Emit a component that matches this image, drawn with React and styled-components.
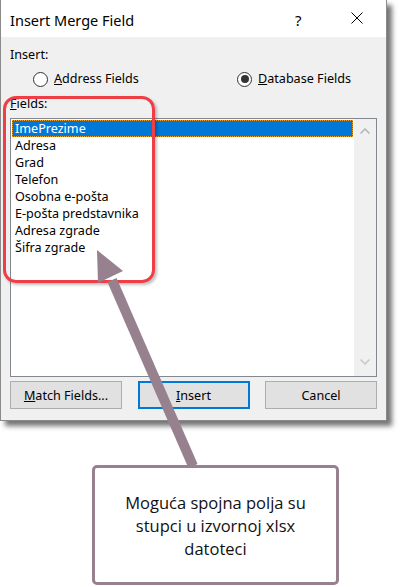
import React from 'react'
import styled, { createGlobalStyle } from 'styled-components'

const GlobalStyle = createGlobalStyle`
  html, body { margin: 0; padding: 0; background: #fff; }
  body { font-family: "Noto Sans", "Open Sans", sans-serif; }
`

const fields = [
  'ImePrezime',
  'Adresa',
  'Grad',
  'Telefon',
  'Osobna e-pošta',
  'E-pošta predstavnika',
  'Adresa zgrade',
  'Šifra zgrade',
]

const App = () => {
  return (
    <Page>
      <GlobalStyle />
      <Dialog>
        <TitleBar>
          <Title>Insert Merge Field</Title>
          <HelpMark>?</HelpMark>
          <CloseIcon viewBox="0 0 12 12">
            <path d="M0.5 0.5 L11.5 11.5 M11.5 0.5 L0.5 11.5" stroke="#000" strokeWidth="1" />
          </CloseIcon>
        </TitleBar>
        <Body>
          <Label>Insert:</Label>
          <RadioRow>
            <RadioOption>
              <Radio />
              <span><u>A</u>ddress Fields</span>
            </RadioOption>
            <RadioOption>
              <Radio checked />
              <span><u>D</u>atabase Fields</span>
            </RadioOption>
          </RadioRow>
          <FieldsLabel><u>F</u>ields:</FieldsLabel>
          <ListBox>
            <Items>
              {fields.map((f, i) => (
                <Item key={f} selected={i === 0}>{f}</Item>
              ))}
            </Items>
            <ScrollBar>
              <svg width="10" height="6" viewBox="0 0 10 6">
                <path d="M0.5 5.5 L5 1 L9.5 5.5" fill="none" stroke="#b4b4b4" strokeWidth="1.5" />
              </svg>
              <svg width="10" height="6" viewBox="0 0 10 6">
                <path d="M0.5 0.5 L5 5 L9.5 0.5" fill="none" stroke="#c8c8c8" strokeWidth="1.5" />
              </svg>
            </ScrollBar>
          </ListBox>
          <ButtonRow>
            <Button><u>M</u>atch Fields...</Button>
            <Button primary><u>I</u>nsert</Button>
            <Button>Cancel</Button>
          </ButtonRow>
        </Body>
      </Dialog>

      <Callout>
        Moguća spojna polja su stupci u izvornoj xlsx datoteci
      </Callout>

      <Highlight />
      <ArrowLayer viewBox="0 0 402 587" width="402" height="587">
        <line x1="112" y1="280" x2="193" y2="466" stroke="#97818f" strokeWidth="10" />
        <polygon points="97,250 123,271 98,283" fill="#97818f" />
      </ArrowLayer>
    </Page>
  )
}

const Page = styled.div`
  position: relative;
  width: 402px;
  height: 587px;
  overflow: hidden;
  background: #fff;
`

const Dialog = styled.div`
  width: 387px;
  height: 421px;
  box-sizing: border-box;
  border: 1px solid #8a8a8a;
  border-top: none;
  background: #f0f0f0;
  box-shadow: 5px 5px 5px rgba(0, 0, 0, 0.55);
  display: flex;
  flex-direction: column;
`

const TitleBar = styled.div`
  height: 37px;
  background: #fff;
  display: flex;
  align-items: center;
  padding-left: 9px;
  padding-top: 2px;
  box-sizing: border-box;
`

const Title = styled.div`
  flex: 1;
  font-size: 14.5px;
  color: #000;
`

const HelpMark = styled.div`
  font-size: 15px;
  width: 14px;
  margin-right: 42px;
`

const CloseIcon = styled.svg`
  width: 12px;
  height: 12px;
  margin-right: 23px;
  margin-bottom: 3px;
`

const Body = styled.div`
  flex: 1;
  display: flex;
  flex-direction: column;
  padding: 10px 9px 11px 9px;
  font-size: 12.6px;
  color: #000;
`

const Label = styled.div`
  line-height: 16px;
`

const RadioRow = styled.div`
  display: flex;
  height: 16px;
  margin-top: 8px;
  padding-left: 23px;
`

const RadioOption = styled.label`
  display: flex;
  align-items: center;
  gap: 6px;
  line-height: 16px;
  &:first-child { width: 204px; }
`

const Radio = styled.span`
  width: 15px;
  height: 15px;
  border: 1px solid #333;
  border-radius: 50%;
  background: #fff;
  box-sizing: border-box;
  display: flex;
  align-items: center;
  justify-content: center;
  &::after {
    content: '';
    width: 8px;
    height: 8px;
    border-radius: 50%;
    background: ${p => (p.checked ? '#333' : 'transparent')};
  }
`

const FieldsLabel = styled.div`
  margin-top: 9px;
  line-height: 16px;
`

const ListBox = styled.div`
  margin-top: 6px;
  height: 259px;
  border: 1px solid #828790;
  background: #fff;
  display: flex;
  box-sizing: border-box;
`

const Items = styled.div`
  flex: 1;
  padding: 1px;
`

const Item = styled.div`
  height: 17px;
  line-height: 17px;
  padding-left: 3px;
  box-sizing: border-box;
  background: ${p => (p.selected ? '#0078d7' : 'transparent')};
  color: ${p => (p.selected ? '#fff' : '#000')};
  outline: ${p => (p.selected ? '1px dotted #f0a030' : 'none')};
  outline-offset: -1px;
`

const ScrollBar = styled.div`
  width: 22px;
  background: #f0f0f0;
  display: flex;
  flex-direction: column;
  justify-content: space-between;
  align-items: center;
  padding: 9px 0 11px;
  box-sizing: border-box;
`

const ButtonRow = styled.div`
  margin-top: 4px;
  display: flex;
  justify-content: space-between;
`

const Button = styled.div`
  width: 112px;
  height: 28px;
  box-sizing: border-box;
  background: #e1e1e1;
  border: ${p => (p.primary ? '2px solid #0078d7' : '1px solid #adadad')};
  display: flex;
  align-items: center;
  justify-content: center;
  font-size: 12.6px;
`

const Callout = styled.div`
  width: 247px;
  height: 120px;
  margin: 44px 0 0 92px;
  box-sizing: border-box;
  border: 3px solid #97818f;
  border-radius: 5px;
  background: #fff;
  display: flex;
  align-items: center;
  justify-content: center;
  text-align: center;
  padding: 0 22px;
  font-family: "Open Sans", sans-serif;
  font-size: 16.5px;
  line-height: 23px;
  color: #111;
  position: relative;
  z-index: 2;
`

const Highlight = styled.div`
  position: absolute;
  left: 3px;
  top: 96px;
  width: 152px;
  height: 187px;
  box-sizing: border-box;
  border: 3px solid #ef3e46;
  border-radius: 13px;
  box-shadow: 2px 2px 3px rgba(0, 0, 0, 0.25);
  pointer-events: none;
`

const ArrowLayer = styled.svg`
  position: absolute;
  left: 0;
  top: 0;
  pointer-events: none;
  z-index: 1;
`

export default App
